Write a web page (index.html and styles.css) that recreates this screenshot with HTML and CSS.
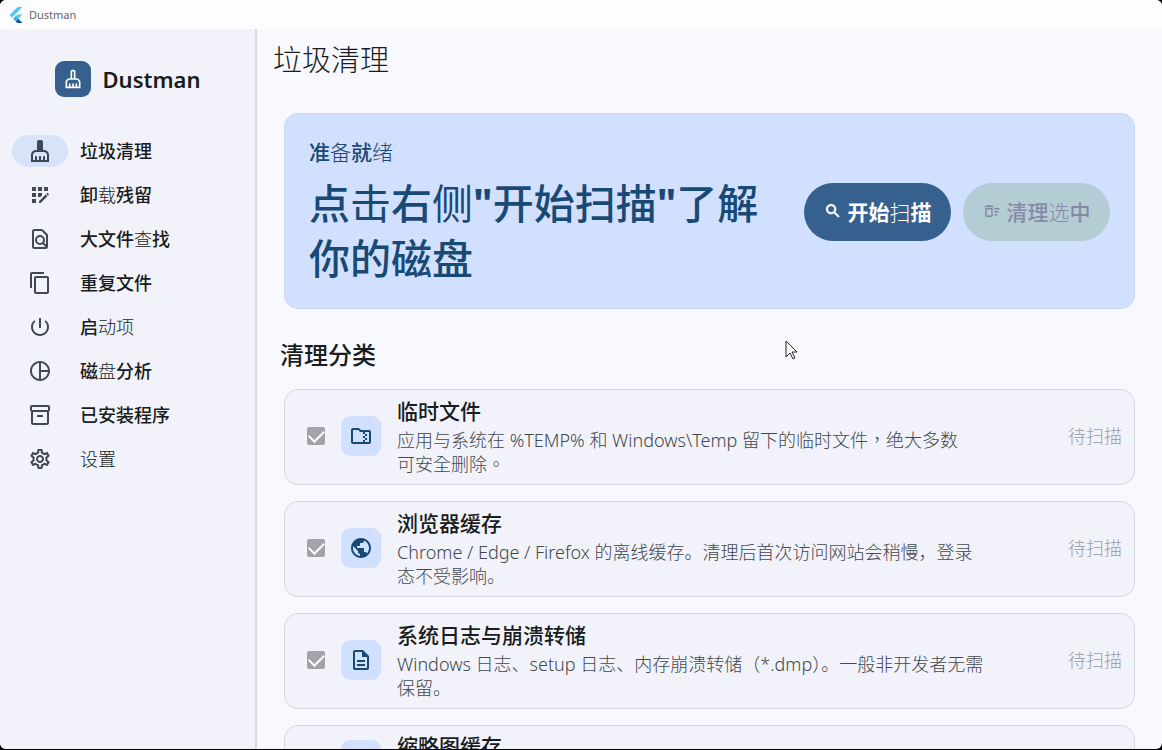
FILE: index.html
```html
<!DOCTYPE html>
<html lang="zh-CN">
<head>
  <meta charset="utf-8">
  <title>Dustman</title>
  <link rel="stylesheet" href="styles.css">
</head>
<body>
  <div class="window">
    <header class="titlebar">
      <svg class="flutter" viewBox="0 0 24 24">
        <path fill="#54c5f8" d="M14.3 0L2.3 12 6 15.7 21.7 0z"/>
        <path fill="#54c5f8" d="M14.3 11.1L7.9 17.5l3.7 3.7 10-10.1z"/>
        <path fill="#01579b" d="M11.6 21.2l2.7 2.8h7.4l-6.4-6.5z"/>
        <path fill="#29b6f6" d="M7.9 17.5l3.7-3.7 3.7 3.7-3.7 3.7z"/>
      </svg>
      <span>Dustman</span>
    </header>

    <div class="layout">
      <aside class="sidebar">
        <div class="brand">
          <span class="logo">
            <svg class="icon-small" viewBox="0 0 24 24"><path d="M16 11h-1V3c0-1.100-.9-2-2-2h-2C9.900 1 9 1.900 9 3v8H8c-2.760 0-5 2.240-5 5v7h18v-7c0-2.760-2.240-5-5-5zM11 3h2v8h-2V3zm8 18h-2v-3c0-.55-.45-1-1-1s-1 .45-1 1v3h-2v-3c0-.55-.45-1-1-1s-1 .45-1 1v3H9v-3c0-.55-.45-1-1-1s-1 .45-1 1v3H5v-5c0-1.650 1.350-3 3-3h8c1.650 0 3 1.350 3 3v5z"/></svg>
          </span>
          <span class="brand-name">Dustman</span>
        </div>
        <nav class="menu">
          <a href="#" class="menu-item active">
            <span class="pill"><svg class="icon" viewBox="0 0 24 24"><path d="M16 11h-1V3c0-1.100-.9-2-2-2h-2C9.900 1 9 1.900 9 3v8H8c-2.760 0-5 2.240-5 5v7h18v-7c0-2.760-2.240-5-5-5zm3 10h-2v-3c0-.55-.45-1-1-1s-1 .45-1 1v3h-2v-3c0-.55-.45-1-1-1s-1 .45-1 1v3H9v-3c0-.55-.45-1-1-1s-1 .45-1 1v3H5v-5c0-1.650 1.350-3 3-3h8c1.650 0 3 1.350 3 3v5z"/></svg></span>
            <span class="menu-label">垃圾清理</span>
          </a>
          <a href="#" class="menu-item">
            <span class="pill"><svg class="icon" viewBox="0 0 24 24"><path d="M10 4h4v4h-4zM4 16h4v4H4zM4 10h4v4H4zM4 4h4v4H4zM14 12.420V10h-4v4h2.420zM20.880 11.290l-1.170-1.170c-.16-.16-.42-.16-.58 0l-.88.88L20 12.750l.88-.88c.16-.16.16-.42 0-.58zM11 18.250V20h1.750l6.670-6.670-1.750-1.750zM16 4h4v4h-4z"/></svg></span>
            <span class="menu-label">卸<span class="thin">载</span>残留</span>
          </a>
          <a href="#" class="menu-item">
            <span class="pill"><svg class="icon line" viewBox="0 0 24 24"><path d="M14 3H6.500Q5 3 5 4.500v15Q5 21 6.500 21h11q1.500 0 1.500-1.500V8L14 3M15 16l4 4"/><circle cx="12" cy="13" r="4"/></svg></span>
            <span class="menu-label">大文件<span class="thin">查</span>找</span>
          </a>
          <a href="#" class="menu-item">
            <span class="pill"><svg class="icon" viewBox="0 0 24 24"><path d="M16 1H4c-1.100 0-2 .9-2 2v14h2V3h12V1zm3 4H8c-1.100 0-2 .9-2 2v14c0 1.100.9 2 2 2h11c1.100 0 2-.9 2-2V7c0-1.100-.9-2-2-2zm0 16H8V7h11v14z"/></svg></span>
            <span class="menu-label">重复文件</span>
          </a>
          <a href="#" class="menu-item">
            <span class="pill"><svg class="icon" viewBox="0 0 24 24"><path d="M13 3h-2v10h2V3zm4.830 2.170l-1.420 1.420C17.990 7.860 19 9.810 19 12c0 3.870-3.130 7-7 7s-7-3.130-7-7c0-2.190 1.010-4.140 2.580-5.420L6.170 5.170C4.230 6.820 3 9.260 3 12c0 4.970 4.030 9 9 9s9-4.030 9-9c0-2.740-1.230-5.180-3.170-6.830z"/></svg></span>
            <span class="menu-label">启<span class="thin">动项</span></span>
          </a>
          <a href="#" class="menu-item">
            <span class="pill"><svg class="icon" viewBox="0 0 24 24"><path d="M12 2C6.480 2 2 6.480 2 12s4.480 10 10 10 10-4.480 10-10S17.520 2 12 2zm1 2.070c3.610.45 6.480 3.330 6.930 6.930H13V4.070zM4 12c0-4.060 3.070-7.440 7-7.930v15.870c-3.930-.5-7-3.880-7-7.940zm9 7.930V13h6.930c-.45 3.610-3.320 6.480-6.930 6.930z"/></svg></span>
            <span class="menu-label">磁<span class="thin">盘</span>分析</span>
          </a>
          <a href="#" class="menu-item">
            <span class="pill"><svg class="icon line" viewBox="0 0 24 24"><path d="M4 3h16q1 0 1 1v3q0 1-1 1H4Q3 8 3 7V4q0-1 1-1zM4 8v11.500Q4 21 5.500 21h13q1.500 0 1.500-1.500V8M9 13h6"/></svg></span>
            <span class="menu-label">已安装程序</span>
          </a>
          <a href="#" class="menu-item">
            <span class="pill"><svg class="icon" viewBox="0 0 24 24"><path d="M19.430 12.980c.04-.32.07-.64.07-.98 0-.34-.03-.66-.07-.98l2.110-1.650c.19-.15.24-.42.12-.64l-2-3.460c-.09-.16-.26-.25-.44-.25-.06 0-.12.01-.17.03l-2.490 1c-.52-.4-1.080-.73-1.690-.98l-.38-2.650C14.460 2.180 14.250 2 14 2h-4c-.25 0-.46.18-.49.42l-.38 2.650c-.61.25-1.170.59-1.690.98l-2.490-1c-.06-.02-.12-.03-.18-.03-.17 0-.34.09-.43.25l-2 3.460c-.13.22-.07.49.12.64l2.110 1.650c-.04.32-.07.65-.07.98 0 .33.03.66.07.98l-2.110 1.650c-.19.15-.24.42-.12.64l2 3.460c.09.16.26.25.44.25.06 0 .12-.01.17-.03l2.490-1c.52.4 1.080.73 1.690.98l.38 2.650c.03.24.24.42.49.42h4c.25 0 .46-.18.49-.42l.38-2.650c.61-.25 1.170-.59 1.690-.98l2.490 1c.06.02.12.03.18.03.17 0 .34-.09.43-.25l2-3.460c.12-.22.07-.49-.12-.64l-2.110-1.650zm-1.980-1.710c.04.31.05.52.05.73 0 .21-.02.43-.05.73l-.14 1.130.89.7 1.080.84-.7 1.210-1.270-.51-1.040-.42-.9.68c-.43.32-.84.56-1.250.73l-1.060.43-.16 1.130-.2 1.350h-1.400l-.19-1.350-.16-1.130-1.060-.43c-.43-.18-.83-.41-1.230-.71l-.91-.7-1.060.43-1.270.51-.7-1.210 1.080-.84.89-.7-.14-1.130c-.03-.31-.05-.54-.05-.74s.02-.43.05-.73l.14-1.130-.89-.7-1.080-.84.7-1.210 1.270.51 1.040.42.9-.68c.43-.32.84-.56 1.250-.73l1.060-.43.16-1.130.2-1.350h1.390l.19 1.350.16 1.130 1.060.43c.43.18.83.41 1.230.71l.91.7 1.060-.43 1.270-.51.7 1.210-1.070.85-.89.7.14 1.130zM12 8c-2.210 0-4 1.790-4 4s1.790 4 4 4 4-1.790 4-4-1.790-4-4-4zm0 6c-1.100 0-2-.9-2-2s.9-2 2-2 2 .9 2 2-.9 2-2 2z"/></svg></span>
            <span class="menu-label thin">设置</span>
          </a>
        </nav>
      </aside>

      <main class="content">
        <h1>垃圾清理</h1>

        <section class="hero">
          <div class="hero-text">
            <p class="hero-label">准<span class="thin">备</span>就<span class="thin">绪</span></p>
            <p class="hero-title">点<span class="regular">击</span>右<span class="regular">侧</span><b>"</b>开始扫描<b>"</b>了解你的磁盘</p>
          </div>
          <div class="hero-actions">
            <button type="button" class="btn">
              <svg class="icon-button" viewBox="0 0 24 24"><path d="M15.500 14h-.79l-.28-.27C15.410 12.590 16 11.110 16 9.500 16 5.910 13.090 3 9.500 3S3 5.910 3 9.500 5.910 16 9.500 16c1.610 0 3.090-.59 4.230-1.570l.27.28v.79l5 4.990L20.490 19l-4.990-5zm-6 0C7.010 14 5 11.990 5 9.500S7.010 5 9.500 5 14 7.010 14 9.500 11.990 14 9.500 14z" stroke="currentColor"/></svg>
              <span>开始<span class="thin">扫</span>描</span>
            </button>
            <button type="button" class="btn" disabled>
              <svg class="icon-button" viewBox="0 0 24 24"><path d="M15 16h4v2h-4zm0-8h7v2h-7zm0 4h6v2h-6zM3 18c0 1.100.9 2 2 2h6c1.100 0 2-.9 2-2V8H3v10zm2-8h6v8H5v-8zm5-6H6L5 5H2v2h12V5h-3z"/></svg>
              <span>清理<span class="thin">选</span>中</span>
            </button>
          </div>
        </section>

        <h2>清理分类</h2>

        <div class="cards">
          <article class="card">
            <input type="checkbox" id="temp" checked disabled>
            <span class="tile"><svg class="icon" viewBox="0 0 24 24"><path d="M20 6h-8l-2-2H4c-1.100 0-2 .9-2 2v12c0 1.100.9 2 2 2h16c1.100 0 2-.9 2-2V8c0-1.100-.9-2-2-2zm-4 6h-2v-2h2v2zm0 2v-2h2v2h-2zm-2 0h2v2h-2v-2zm2-4V8h2v2h-2zm-2 8H4V6h5.170l2 2H14v2h0v8zm2-2h2v2h-2v-2zm4 2h-2V8h2v10z"/></svg></span>
            <div class="card-text">
              <label for="temp">临时文件</label>
              <p lang="zh-TW">应用与系统在 %TEMP% 和 Windows\Temp 留下的临时文件，绝大多数<br>可安全删除。</p>
            </div>
            <span class="status">待扫描</span>
          </article>

          <article class="card">
            <input type="checkbox" id="browser" checked disabled>
            <span class="tile"><svg class="icon" viewBox="0 0 24 24"><path d="M12 2C6.480 2 2 6.480 2 12s4.480 10 10 10 10-4.480 10-10S17.520 2 12 2zm-1 17.930c-3.950-.49-7-3.850-7-7.930 0-.62.08-1.210.21-1.790L9 15v1c0 1.100.9 2 2 2v1.930zm6.900-2.540c-.26-.81-1-1.390-1.900-1.390h-1v-3c0-.55-.45-1-1-1H8v-2h2c.55 0 1-.45 1-1V7h2c1.100 0 2-.9 2-2v-.41c2.930 1.190 5 4.060 5 7.410 0 2.080-.8 3.970-2.100 5.390z"/></svg></span>
            <div class="card-text">
              <label for="browser">浏览器缓存</label>
              <p>Chrome / Edge / Firefox 的离线缓存。清理后首次访问网站会稍慢，登录态不受影响。</p>
            </div>
            <span class="status">待扫描</span>
          </article>

          <article class="card">
            <input type="checkbox" id="logs" checked disabled>
            <span class="tile"><svg class="icon" viewBox="0 0 24 24"><path d="M8 16h8v2H8zm0-4h8v2H8zm6-10H6c-1.100 0-2 .9-2 2v16c0 1.100.89 2 1.990 2H18c1.100 0 2-.9 2-2V8l-6-6zm4 18H6V4h7v5h5v11z"/></svg></span>
            <div class="card-text">
              <label for="logs">系统日志与崩溃转储</label>
              <p>Windows 日志、setup 日志、内存崩溃转储（*.dmp）。一般非开发者无需保留。</p>
            </div>
            <span class="status">待扫描</span>
          </article>

          <article class="card short">
            <span class="check-space"></span>
            <span class="tile"></span>
            <div class="card-text">
              <strong>缩略图缓存</strong>
            </div>
          </article>
        </div>
      </main>
    </div>
  </div>

  <svg class="cursor" viewBox="0 0 13 20"><path d="M1 1v16l4-4 3 6 2-1-3-6h5z" fill="#fff" stroke="#222"/></svg>
</body>
</html>
```
FILE: styles.css
```css
* {
  box-sizing: border-box;
}

body {
  margin: 0;
  height: 100vh;
  padding-bottom: 1px;
  overflow: hidden;
  background-color: #000;
  color: #191c20;
  font-family: "Noto Sans", "Noto Sans CJK SC", sans-serif;
  font-size: 18px;
}

h1, h2, p {
  margin: 0;
}

.window {
  display: flex;
  flex-direction: column;
  height: 100%;
  overflow: hidden;
  border-radius: 6px;
  background-color: #f8f9ff;
}

.titlebar {
  display: flex;
  flex: none;
  align-items: center;
  gap: 5px;
  height: 29px;
  padding-left: 8px;
  background-color: #fdfdff;
  color: #666;
  font-size: 11px;
}

.flutter {
  width: 16px;
  height: 16px;
}

.layout {
  display: flex;
  flex: 1;
  min-height: 0;
}

/* sidebar */
.sidebar {
  flex: 0 0 257px;
  border-right: 2px solid #d9dae1;
  background-color: #f2f3fa;
}

.brand {
  display: flex;
  align-items: center;
  justify-content: center;
  gap: 12px;
  height: 100px;
}

.logo {
  display: flex;
  align-items: center;
  justify-content: center;
  width: 36px;
  height: 36px;
  border-radius: 9px;
  background-color: #36618e;
  color: #fff;
}

.brand-name {
  font-size: 22px;
  font-weight: 600;
}

.menu {
  display: flex;
  flex-direction: column;
}

.menu-item {
  display: flex;
  align-items: center;
  gap: 12px;
  height: 44px;
  padding-left: 12px;
  color: #191c20;
  font-weight: 500;
  text-decoration: none;
}

.menu-label {
  padding-bottom: 2px;
}

.pill {
  display: flex;
  align-items: center;
  justify-content: center;
  width: 56px;
  height: 32px;
  border-radius: 16px;
  color: #43474e;
}

.active .pill {
  background-color: #d7e3f8;
  color: #3c4858;
}

.thin {
  font-weight: 300;
}

.regular {
  font-weight: 400;
}

.icon {
  width: 24px;
  height: 24px;
  fill: currentColor;
}

.icon.line {
  fill: none;
  stroke: currentColor;
  stroke-width: 2;
}

.icon-small {
  width: 20px;
  height: 20px;
  fill: currentColor;
}

.icon-button {
  width: 18px;
  height: 18px;
  fill: currentColor;
}

/* main area */
.content {
  flex: 1;
  min-width: 0;
  padding: 0 27px;
  overflow: hidden;
}

h1 {
  margin-left: -11px;
  padding: 11px 0 33px;
  font-size: 29px;
  font-weight: 300;
  line-height: 40px;
}

.hero {
  display: flex;
  align-items: center;
  gap: 24px;
  padding: 24px 24px 22px;
  border: 1px solid #c8d6ee;
  border-radius: 14px;
  background-color: #d1e0ff;
  color: #194975;
}

.hero-text {
  flex: 1;
}

.hero-label {
  margin-bottom: 10px;
  font-size: 21px;
  font-weight: 500;
  line-height: 28px;
}

.hero-title {
  font-size: 41px;
  font-weight: 500;
  line-height: 55px;
}

.hero-actions {
  display: flex;
  gap: 12px;
}

.btn {
  display: flex;
  align-items: center;
  justify-content: center;
  gap: 6px;
  width: 147px;
  height: 58px;
  padding: 0 0 2px;
  border: none;
  border-radius: 29px;
  background-color: #36618e;
  color: #fff;
  font-family: inherit;
  font-size: 21px;
  font-weight: 700;
  white-space: nowrap;
}

.btn:disabled {
  background-color: #b4cdd4;
  color: #858ba6;
  font-weight: 500;
}

h2 {
  margin: 26px 0 14px -4px;
  font-size: 24px;
  font-weight: 500;
  line-height: 40px;
}

.cards {
  display: flex;
  flex-direction: column;
  gap: 16px;
}

.card {
  display: flex;
  align-items: center;
  min-height: 96px;
  padding: 6px 12px 8px 22px;
  border: 1px solid #d5d8df;
  border-radius: 14px;
  background-color: #f2f3fa;
}

.card.short {
  min-height: 72px;
}

.card.short .card-text {
  align-self: flex-start;
}

.card input {
  display: flex;
  align-items: center;
  justify-content: center;
  flex: none;
  width: 18px;
  height: 18px;
  margin: 0;
  appearance: none;
  border-radius: 2px;
  background-color: #a2a4a9;
}

.card input::before {
  content: "";
  width: 13px;
  height: 7px;
  border: solid #fff;
  border-width: 0 0 2px 2px;
  transform: translateY(-2px) rotate(-45deg);
}

.check-space {
  width: 18px;
}

.tile {
  display: flex;
  flex: none;
  align-items: center;
  justify-content: center;
  width: 40px;
  height: 40px;
  margin: 0 16px;
  border-radius: 9px;
  background-color: #d1e0ff;
  color: #194975;
}

.card-text {
  flex: 1;
  color: #43474e;
}

.card-text label,
.card-text strong {
  display: block;
  margin-bottom: 3px;
  color: #191c20;
  font-size: 21px;
  font-weight: 500;
  line-height: 28px;
}

.card-text p {
  font-weight: 300;
  line-height: 24px;
}

/* centred punctuation */
.card-text p:lang(zh-TW) {
  font-family: "Noto Sans", "Noto Sans CJK TC", sans-serif;
}

.status {
  flex: 0 0 136px;
  padding-bottom: 2px;
  color: #9a9ca2;
  font-weight: 300;
  text-align: right;
}

.cursor {
  position: absolute;
  left: 785px;
  top: 340px;
  width: 13px;
  height: 20px;
}
```
